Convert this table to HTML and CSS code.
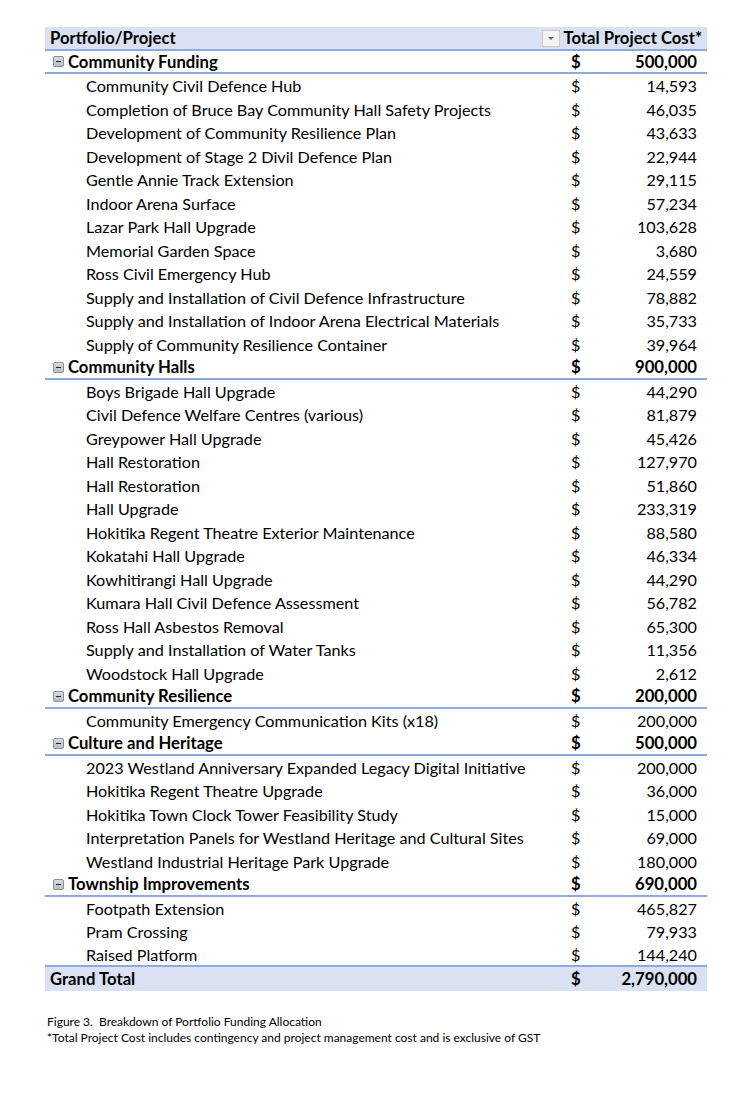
FILE: index.html
```html
<!DOCTYPE html>
<html>
<head>
<meta charset="utf-8">
<link rel="stylesheet" href="styles.css">
</head>
<body>
<div class="page">
  <div class="pivot">
    <div class="row head">
      <div class="label">Portfolio/Project</div>
      <div class="headcost"><span class="dd"><svg width="8" height="5" viewBox="0 0 8 5"><path d="M1 1h6L4 4z" fill="#666"/></svg></span>Total Project Cost*</div>
    </div>

    <div class="row group"><div class="label"><span class="minus"></span>Community Funding</div><div class="cur">$</div><div class="amt">500,000</div></div>
    <div class="row item"><div class="label">Community Civil Defence Hub</div><div class="cur">$</div><div class="amt">14,593</div></div>
    <div class="row item"><div class="label">Completion of Bruce Bay Community Hall Safety Projects</div><div class="cur">$</div><div class="amt">46,035</div></div>
    <div class="row item"><div class="label">Development of Community Resilience Plan</div><div class="cur">$</div><div class="amt">43,633</div></div>
    <div class="row item"><div class="label">Development of Stage 2 Divil Defence Plan</div><div class="cur">$</div><div class="amt">22,944</div></div>
    <div class="row item"><div class="label">Gentle Annie Track Extension</div><div class="cur">$</div><div class="amt">29,115</div></div>
    <div class="row item"><div class="label">Indoor Arena Surface</div><div class="cur">$</div><div class="amt">57,234</div></div>
    <div class="row item"><div class="label">Lazar Park Hall Upgrade</div><div class="cur">$</div><div class="amt">103,628</div></div>
    <div class="row item"><div class="label">Memorial Garden Space</div><div class="cur">$</div><div class="amt">3,680</div></div>
    <div class="row item"><div class="label">Ross Civil Emergency Hub</div><div class="cur">$</div><div class="amt">24,559</div></div>
    <div class="row item"><div class="label">Supply and Installation of Civil Defence Infrastructure</div><div class="cur">$</div><div class="amt">78,882</div></div>
    <div class="row item"><div class="label">Supply and Installation of Indoor Arena Electrical Materials</div><div class="cur">$</div><div class="amt">35,733</div></div>
    <div class="row item"><div class="label">Supply of Community Resilience Container</div><div class="cur">$</div><div class="amt">39,964</div></div>

    <div class="row group"><div class="label"><span class="minus"></span>Community Halls</div><div class="cur">$</div><div class="amt">900,000</div></div>
    <div class="row item"><div class="label">Boys Brigade Hall Upgrade</div><div class="cur">$</div><div class="amt">44,290</div></div>
    <div class="row item"><div class="label">Civil Defence Welfare Centres (various)</div><div class="cur">$</div><div class="amt">81,879</div></div>
    <div class="row item"><div class="label">Greypower Hall Upgrade</div><div class="cur">$</div><div class="amt">45,426</div></div>
    <div class="row item"><div class="label">Hall Restoration</div><div class="cur">$</div><div class="amt">127,970</div></div>
    <div class="row item"><div class="label">Hall Restoration</div><div class="cur">$</div><div class="amt">51,860</div></div>
    <div class="row item"><div class="label">Hall Upgrade</div><div class="cur">$</div><div class="amt">233,319</div></div>
    <div class="row item"><div class="label">Hokitika Regent Theatre Exterior Maintenance</div><div class="cur">$</div><div class="amt">88,580</div></div>
    <div class="row item"><div class="label">Kokatahi Hall Upgrade</div><div class="cur">$</div><div class="amt">46,334</div></div>
    <div class="row item"><div class="label">Kowhitirangi Hall Upgrade</div><div class="cur">$</div><div class="amt">44,290</div></div>
    <div class="row item"><div class="label">Kumara Hall Civil Defence Assessment</div><div class="cur">$</div><div class="amt">56,782</div></div>
    <div class="row item"><div class="label">Ross Hall Asbestos Removal</div><div class="cur">$</div><div class="amt">65,300</div></div>
    <div class="row item"><div class="label">Supply and Installation of Water Tanks</div><div class="cur">$</div><div class="amt">11,356</div></div>
    <div class="row item"><div class="label">Woodstock Hall Upgrade</div><div class="cur">$</div><div class="amt">2,612</div></div>

    <div class="row group"><div class="label"><span class="minus"></span>Community Resilience</div><div class="cur">$</div><div class="amt">200,000</div></div>
    <div class="row item"><div class="label">Community Emergency Communication Kits (x18)</div><div class="cur">$</div><div class="amt">200,000</div></div>

    <div class="row group"><div class="label"><span class="minus"></span>Culture and Heritage</div><div class="cur">$</div><div class="amt">500,000</div></div>
    <div class="row item"><div class="label">2023 Westland Anniversary Expanded Legacy Digital Initiative</div><div class="cur">$</div><div class="amt">200,000</div></div>
    <div class="row item"><div class="label">Hokitika Regent Theatre Upgrade</div><div class="cur">$</div><div class="amt">36,000</div></div>
    <div class="row item"><div class="label">Hokitika Town Clock Tower Feasibility Study</div><div class="cur">$</div><div class="amt">15,000</div></div>
    <div class="row item"><div class="label">Interpretation Panels for Westland Heritage and Cultural Sites</div><div class="cur">$</div><div class="amt">69,000</div></div>
    <div class="row item"><div class="label">Westland Industrial Heritage Park Upgrade</div><div class="cur">$</div><div class="amt">180,000</div></div>

    <div class="row group"><div class="label"><span class="minus"></span>Township Improvements</div><div class="cur">$</div><div class="amt">690,000</div></div>
    <div class="row item"><div class="label">Footpath Extension</div><div class="cur">$</div><div class="amt">465,827</div></div>
    <div class="row item"><div class="label">Pram Crossing</div><div class="cur">$</div><div class="amt">79,933</div></div>
    <div class="row item last"><div class="label">Raised Platform</div><div class="cur">$</div><div class="amt">144,240</div></div>

    <div class="row total"><div class="label">Grand Total</div><div class="cur">$</div><div class="amt">2,790,000</div></div>
  </div>

  <div class="caption">
    <p>Figure 3.&nbsp; Breakdown of Portfolio Funding Allocation</p>
    <p>*Total Project Cost includes contingency and project management cost and is exclusive of GST</p>
  </div>
</div>
</body>
</html>
```

FILE: styles.css
```css
html, body {
  margin: 0;
  padding: 0;
  background: #ffffff;
}

.page {
  padding: 27px 0 0 45px;
  font-family: Lato, "Open Sans", sans-serif;
  color: #000;
}

.pivot {
  width: 662px;
  font-size: 16.2px;
}

.row {
  display: grid;
  grid-template-columns: 1fr 16px 110px;
  align-items: center;
  height: 23.5px;
  box-sizing: border-box;
  padding: 0 10px 0 5px;
  white-space: nowrap;
}

.row .label {
  overflow: hidden;
}

.head {
  display: flex;
  justify-content: space-between;
  background: #d9e1f2;
  border-bottom: 2px solid #8ea9db;
  font-weight: 700;
  font-size: 16.7px;
  padding-right: 5px;
  padding-top: 1px;
}

.headcost {
  display: flex;
  align-items: center;
  gap: 3px;
}

.dd {
  display: inline-flex;
  align-items: center;
  justify-content: center;
  width: 18px;
  height: 17px;
  box-sizing: border-box;
  border: 1px solid #c8c8c8;
  background: #f4f4f4;
}

.group {
  font-weight: 700;
  font-size: 16.7px;
  border-bottom: 2px solid #8ea9db;
  padding-left: 8px;
  padding-top: 1px;
}

.group .label {
  display: flex;
  align-items: center;
}

.minus {
  display: inline-block;
  position: relative;
  width: 11px;
  height: 11px;
  box-sizing: border-box;
  border: 1px solid #8a8f99;
  border-radius: 2px;
  background: linear-gradient(#d8dbe0, #b8bcc4);
  margin-right: 4px;
}

.minus::after {
  content: "";
  position: absolute;
  left: 2px;
  right: 2px;
  top: 4px;
  height: 1px;
  background: #222;
}

.item .label {
  padding-left: 36px;
}

.last {
  border-bottom: 2px solid #8ea9db;
}

.total {
  background: #d9e1f2;
  font-weight: 700;
  font-size: 16.7px;
  padding-top: 1px;
}

.cur {
  text-align: left;
}

.amt {
  text-align: right;
}

.caption {
  margin-top: 23px;
  padding-left: 2px;
  font-size: 12px;
  line-height: 16px;
}

.caption p {
  margin: 0;
}
```
